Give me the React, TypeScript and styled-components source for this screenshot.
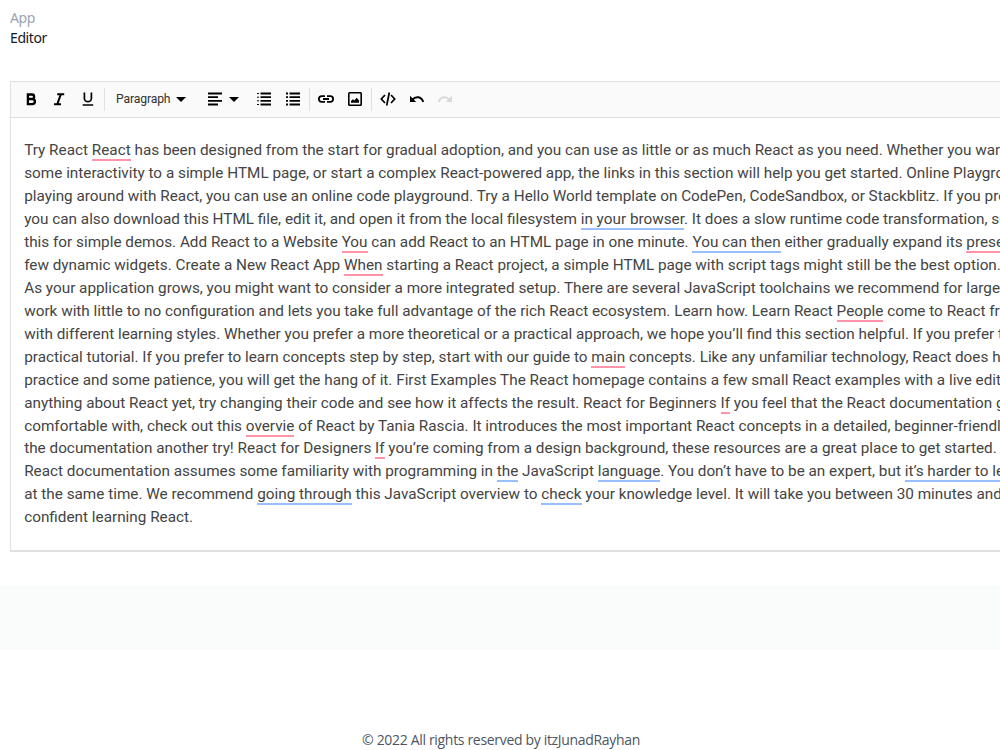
import React from 'react';
import styled, { createGlobalStyle } from 'styled-components';

const GlobalStyle = createGlobalStyle`
  * { box-sizing: border-box; }
  html, body, #root { margin: 0; height: 100%; overflow: hidden; }
  body { background: #fff; }
`;

const Page = styled.div`
  display: flex;
  flex-direction: column;
  height: 750px;
  overflow: hidden;
  font-family: 'Open Sans', sans-serif;
`;

const Header = styled.header`
  height: 81px;
  padding: 8px 0 0 10px;
  font-family: 'Noto Sans', sans-serif;
  font-size: 14px;
  letter-spacing: -0.4px;
  line-height: 20px;
`;

const Category = styled.p`
  margin: 0;
  color: #9ca3af;
`;

const Title = styled.p`
  margin: 0;
  color: #111827;
`;

const Editor = styled.section`
  height: 472px;
  margin-left: 10px;
  border: 1px solid #e0e0e0;
  border-width: 1px 0 2px 1px;
`;

const Toolbar = styled.div`
  display: flex;
  align-items: center;
  height: 36px;
  padding-left: 5.6px;
  background: #fafafa;
  border-bottom: 1px solid #e0e0e0;
`;

const ToolButton = styled.button<{ $width?: number; $disabled?: boolean }>`
  display: flex;
  align-items: center;
  justify-content: center;
  gap: 6px;
  width: ${props => props.$width || 28.4}px;
  height: 34px;
  padding: 0;
  border: 0;
  background: none;
  color: ${props => (props.$disabled ? '#d9d9d9' : '#000')};
  flex-shrink: 0;
`;

const ToolLabel = styled.span`
  font-family: Roboto, sans-serif;
  font-size: 12.2px;
  letter-spacing: -0.15px;
  color: #333;
`;

const Separator = styled.div`
  width: 1px;
  height: 23px;
  margin: 0 2px;
  background: #e0e0e0;
  flex-shrink: 0;
`;

const Content = styled.div`
  padding: 21.2px 0 0 13.2px;
  font-family: Roboto, sans-serif;
  font-size: 15.3px;
  line-height: 22.95px;
  color: #444;
  overflow: hidden;
`;

const Line = styled.div`
  white-space: pre;
`;

const Mark = styled.span<{ $kind: string }>`
  border-bottom: 2px solid ${props => (props.$kind === 'r' ? '#ff94ab' : '#9abfff')};
`;

const Band = styled.div`
  height: 65px;
  margin-top: 33px;
  background: #fafbfb;
`;

const Footer = styled.footer`
  margin-top: 80px;
  padding-left: 2px;
  font-size: 14px;
  letter-spacing: -0.32px;
  line-height: 20px;
  text-align: center;
  color: #4b5563;
`;

// [r:...] marks a spelling hint, [b:...] a grammar hint
const LINES = [
  'Try React [r:React] has been designed from the start for gradual adoption, and you can use as little or as much React as you need. Whether you want',
  'some interactivity to a simple HTML page, or start a complex React-powered app, the links in this section will help you get started. Online Playgrounds',
  'playing around with React, you can use an online code playground. Try a Hello World template on CodePen, CodeSandbox, or Stackblitz. If you prefer',
  'you can also download this HTML file, edit it, and open it from the local filesystem [b:in your browser]. It does a slow runtime code transformation, so',
  'this for simple demos. Add React to a Website [r:You] can add React to an HTML page in one minute. [b:You can then] either gradually expand its [r:presence]',
  'few dynamic widgets. Create a New React App [r:When] starting a React project, a simple HTML page with script tags might still be the best option.',
  'As your application grows, you might want to consider a more integrated setup. There are several JavaScript toolchains we recommend for larger',
  'work with little to no configuration and lets you take full advantage of the rich React ecosystem. Learn how. Learn React [r:People] come to React from',
  'with different learning styles. Whether you prefer a more theoretical or a practical approach, we hope you’ll find this section helpful. If you prefer to',
  'practical tutorial. If you prefer to learn concepts step by step, start with our guide to [r:main] concepts. Like any unfamiliar technology, React does have',
  'practice and some patience, you will get the hang of it. First Examples The React homepage contains a few small React examples with a live editor',
  'anything about React yet, try changing their code and see how it affects the result. React for Beginners [r:If] you feel that the React documentation goes',
  'comfortable with, check out this [r:overvie] of React by Tania Rascia. It introduces the most important React concepts in a detailed, beginner-friendly',
  'the documentation another try! React for Designers [r:If] you’re coming from a design background, these resources are a great place to get started.',
  'React documentation assumes some familiarity with programming in [b:the] JavaScript [b:language]. You don’t have to be an expert, but [b:it’s harder to learn]',
  'at the same time. We recommend [b:going through] this JavaScript overview to [b:check] your knowledge level. It will take you between 30 minutes and',
  'confident learning React.',
];

function renderLine(line: string) {
  return line.split(/(\[[rb]:[^\]]+\])/).map((part, i) =>
    part[0] === '[' ? (
      <Mark key={i} $kind={part[1]}>{part.slice(3, -1)}</Mark>
    ) : (
      part
    )
  );
}

interface IconProps {
  children: React.ReactNode;
}

function Icon({ children }: IconProps) {
  return (
    <svg width="16" height="16" viewBox="0 0 16 16" fill="none" stroke="currentColor">
      {children}
    </svg>
  );
}

const Caret = () => (
  <svg width="10" height="5" viewBox="0 0 10 5" fill="currentColor">
    <path d="M0 0h10L5 5z" />
  </svg>
);

const ListIcon = ({ marker }: { marker: number }) => (
  <Icon>
    <path d="M4.5 2.5H15M4.5 6.2H15M4.5 9.8H15M4.5 13.5H15" strokeWidth="1.8" />
    <path d="M1 2.5h2M1 6.2h2M1 9.8h2M1 13.5h2" strokeWidth={marker} />
  </Icon>
);

export default function App() {
  return (
    <Page>
      <GlobalStyle />
      <Header>
        <Category>App</Category>
        <Title>Editor</Title>
      </Header>
      <Editor>
        <Toolbar>
          <ToolButton title="Bold">
            <Icon><path d="M4.9 3.5h4a2.2 2.2 0 0 1 0 4.5h-4zM4.9 8h4.4a2.6 2.6 0 0 1 0 5.2H4.9z" strokeWidth="2.3" /></Icon>
          </ToolButton>
          <ToolButton title="Italic">
            <Icon><path d="M6.2 3.3h7M3 13.2h7M9.8 3.3L6.3 13.2" strokeWidth="2" /></Icon>
          </ToolButton>
          <ToolButton title="Underline">
            <Icon>
              <path d="M4.4 1.4v5.8a3.5 3.5 0 0 0 7 0V1.4" strokeWidth="1.7" />
              <path d="M2.7 14h10.5" strokeWidth="1.5" />
            </Icon>
          </ToolButton>
          <Separator />
          <ToolButton $width={89}>
            <ToolLabel>Paragraph</ToolLabel>
            <Caret />
          </ToolButton>
          <ToolButton $width={54.5} title="Alignment">
            <Icon><path d="M1 2.5h14M1 6.2h10M1 9.8h14M1 13.5h10" strokeWidth="1.8" /></Icon>
            <Caret />
          </ToolButton>
          <ToolButton title="Numbered list"><ListIcon marker={1} /></ToolButton>
          <ToolButton title="Bulleted list"><ListIcon marker={1.8} /></ToolButton>
          <Separator />
          <ToolButton title="Insert link">
            <Icon><path d="M7 5.2H3.7a2.8 2.8 0 0 0 0 5.6H7M9 5.2h3.3a2.8 2.8 0 0 1 0 5.6H9M5 8h6" strokeWidth="1.8" /></Icon>
          </ToolButton>
          <ToolButton title="Insert image">
            <Icon>
              <rect x="1.8" y="1.8" width="12.4" height="12.4" rx="0.7" strokeWidth="1.6" />
              <path d="M4 11.7V10l1.8-1.7 1.4 1.2L9.7 6.7 12 9.5v2.2z" fill="currentColor" stroke="none" />
            </Icon>
          </ToolButton>
          <Separator />
          <ToolButton $width={29} title="Code view">
            <Icon><path d="M5 4L1.3 8 5 12M11 4l3.7 4L11 12M9.3 1.5l-2.6 13" strokeWidth="1.7" /></Icon>
          </ToolButton>
          <ToolButton title="Undo">
            <Icon>
              <path d="M1 4.7v6.2h6.2z" fill="currentColor" stroke="none" />
              <path d="M3.2 8.8C6.8 4.8 12.3 5.4 14.3 11" strokeWidth="1.9" />
            </Icon>
          </ToolButton>
          <ToolButton $disabled title="Redo">
            <Icon>
              <path d="M15 4.7v6.2H8.8z" fill="currentColor" stroke="none" />
              <path d="M12.8 8.8C9.2 4.8 3.7 5.4 1.7 11" strokeWidth="1.9" />
            </Icon>
          </ToolButton>
        </Toolbar>
        <Content>
          {LINES.map((line, index) => (
            <Line key={index}>{renderLine(line)}</Line>
          ))}
        </Content>
      </Editor>
      <Band />
      <Footer>© 2022 All rights reserved by itzJunadRayhan</Footer>
    </Page>
  );
}
